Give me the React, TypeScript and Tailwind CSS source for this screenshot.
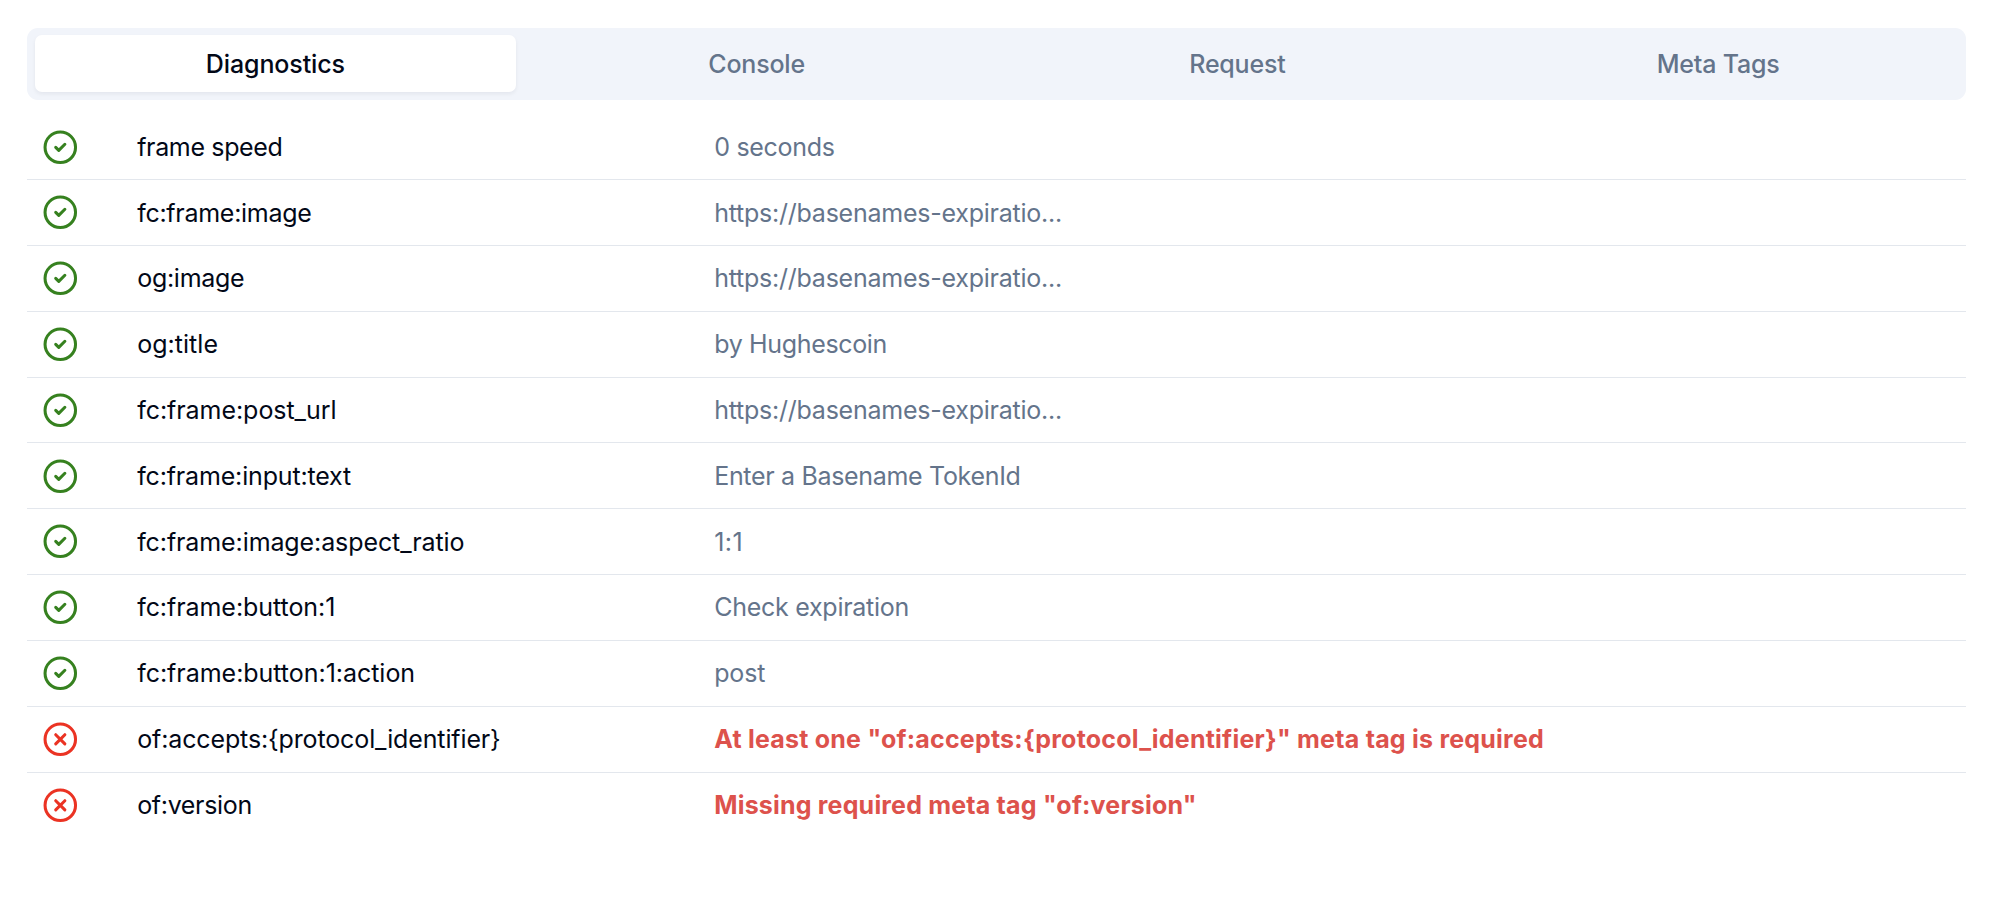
import React from "react";
import { CircleCheck, CircleX } from "lucide-react";

type Row = { ok: boolean; name: string; value: string; nameClass: string; valueClass: string };

const rows: Row[] = [
  { ok: true, name: "frame speed", value: "0 seconds", nameClass: "tracking-[-0.35px]", valueClass: "tracking-[-0.3px]" },
  { ok: true, name: "fc:frame:image", value: "https://basenames-expiratio...", nameClass: "tracking-[-0.28px]", valueClass: "tracking-[-0.24px]" },
  { ok: true, name: "og:image", value: "https://basenames-expiratio...", nameClass: "tracking-[-0.28px]", valueClass: "tracking-[-0.24px]" },
  { ok: true, name: "og:title", value: "by Hughescoin", nameClass: "tracking-[0.03px]", valueClass: "tracking-[-0.34px]" },
  { ok: true, name: "fc:frame:post_url", value: "https://basenames-expiratio...", nameClass: "tracking-[-0.05px]", valueClass: "tracking-[-0.24px]" },
  { ok: true, name: "fc:frame:input:text", value: "Enter a Basename TokenId", nameClass: "tracking-[-0.16px]", valueClass: "tracking-[-0.32px]" },
  { ok: true, name: "fc:frame:image:aspect_ratio", value: "1:1", nameClass: "tracking-[-0.1px]", valueClass: "tracking-[0.5px]" },
  { ok: true, name: "fc:frame:button:1", value: "Check expiration", nameClass: "tracking-[-0.06px]", valueClass: "tracking-[-0.27px]" },
  { ok: true, name: "fc:frame:button:1:action", value: "post", nameClass: "tracking-[-0.03px]", valueClass: "tracking-[-0.15px]" },
  { ok: false, name: "of:accepts:{protocol_identifier}", value: 'At least one "of:accepts:{protocol_identifier}" meta tag is required', nameClass: "tracking-[-0.13px]", valueClass: "tracking-[0.225px]" },
  { ok: false, name: "of:version", value: 'Missing required meta tag "of:version"', nameClass: "tracking-[-0.33px]", valueClass: "tracking-[0.19px]" },
];

const tabs = ["Diagnostics", "Console", "Request", "Meta Tags"];

export default function App() {
  return (
    <div className="min-h-[908px] bg-white pt-7 pr-[26px] pl-[27px] font-['Inter',sans-serif] text-[25px] leading-9 text-[#020817]">
      <div className="grid h-[72px] grid-cols-4 rounded-[11px] bg-[#f1f4fa] px-2 pt-[7px] pb-2">
        {tabs.map((tab, i) => (
          <button
            key={tab}
            className={
              i === 0
                ? "rounded-[7px] bg-white pt-px font-medium tracking-[-0.1px] shadow-[0_2px_4px_rgba(15,23,42,0.06)]"
                : "pt-px pl-px font-medium tracking-[-0.2px] text-[#64748b]"
            }
          >
            {tab}
          </button>
        ))}
      </div>
      <div className="mt-[14.4px]">
        {rows.map((row, i) => (
          <div
            key={row.name}
            className={`grid h-[65.82px] grid-cols-[95.5px_577px_1fr] items-center pl-[14.7px] ${i < rows.length - 1 ? "border-b border-[#e3e7ed]" : ""}`}
          >
            {row.ok ? (
              <CircleCheck className="size-[36.6px] text-[#36811f]" />
            ) : (
              <CircleX className="size-[36.6px] text-[#eb3323]" />
            )}
            <span className={row.nameClass}>{row.name}</span>
            <span className={`${row.valueClass} ${row.ok ? "text-[#64748b]" : "font-bold text-[#dd524c]"}`}>{row.value}</span>
          </div>
        ))}
      </div>
    </div>
  );
}
